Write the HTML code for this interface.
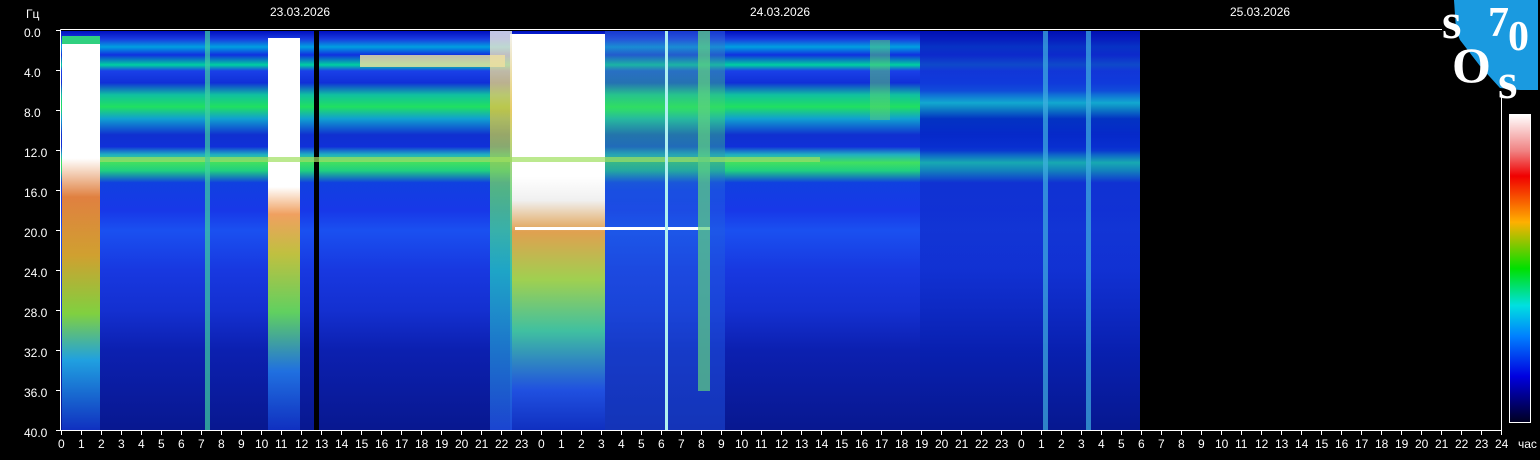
<!DOCTYPE html>
<html><head><meta charset="utf-8"><style>
body{margin:0;width:1540px;height:460px;background:#000;overflow:hidden;position:relative;font-family:"Liberation Sans",sans-serif;color:#fff}
.a{position:absolute}
.lbl{position:absolute;font-size:12px;color:#fff}
</style></head><body>
<div class="a" style="left:61px;top:31px;width:1079px;height:399px;background:linear-gradient(180deg,#0010c0 0%,#1a3ae0 2%,#00a0e0 4%,#1030e0 6%,#00d0a0 8.5%,#1a40e8 10%,#1030d8 13%,#10c0a0 16%,#20e060 19%,#10a0d0 22%,#1030d0 26%,#1030d8 29%,#20b0c0 31%,#40e060 33%,#20d080 35%,#1040e0 38%,#1838e8 45%,#1a50f0 50%,#1838e0 60%,#1430d0 70%,#0c20b0 80%,#081890 100%)"></div>
<div class="a" style="left:920px;top:31px;width:220px;height:399px;background:linear-gradient(180deg,#0010b0 0%,#1030d0 8%,#1040e0 15%,#10a0e0 18%,#0020c0 22%,#0830d0 30%,#10a0c0 33%,#1030d0 38%,#1030d0 60%,#0820b0 80%,#061890 100%);opacity:.85"></div>
<div class="a" style="left:62px;top:42px;width:38px;height:388px;background:linear-gradient(180deg,#fff 0%,#fff 30%,#e08040 40%,#d0a030 55%,#80d040 70%,#20a0e0 82%,#1030c0 100%)"></div>
<div class="a" style="left:62px;top:36px;width:38px;height:8px;background:#30d080"></div>
<div class="a" style="left:268px;top:38px;width:32px;height:392px;background:linear-gradient(180deg,#fff 0%,#fff 38%,#f0a060 45%,#c0c040 55%,#60d060 70%,#2070e0 85%,#1030c0 100%)"></div>
<div class="a" style="left:314px;top:31px;width:5px;height:399px;background:#000"></div>
<div class="a" style="left:510px;top:34px;width:95px;height:396px;background:linear-gradient(180deg,#fff 0%,#fff 36%,#f0f0f0 42%,#e0a050 50%,#a0d050 62%,#40c0a0 75%,#2050e0 90%,#1030c0 100%)"></div>
<div class="a" style="left:490px;top:31px;width:22px;height:399px;background:linear-gradient(180deg,#f0f0f0 0%,#e0c040 20%,#60d070 40%,#20c0c0 60%,#2050e0 100%);opacity:.8"></div>
<div class="a" style="left:605px;top:31px;width:120px;height:399px;background:linear-gradient(180deg,#3060e0 0%,#40e060 20%,#2060e0 40%,#2050e0 100%);opacity:.5"></div>
<div class="a" style="left:360px;top:55px;width:145px;height:12px;background:#f0e0a0;opacity:.8"></div>
<div class="a" style="left:100px;top:157px;width:720px;height:5px;background:#a0e060;opacity:.7"></div>
<div class="a" style="left:515px;top:227px;width:195px;height:3px;background:#fff"></div>
<div class="a" style="left:205px;top:31px;width:5px;height:399px;background:#40d0a0;opacity:.7"></div>
<div class="a" style="left:665px;top:31px;width:3px;height:399px;background:#b0f0f0"></div>
<div class="a" style="left:698px;top:31px;width:12px;height:360px;background:#60d080;opacity:.7"></div>
<div class="a" style="left:1043px;top:31px;width:5px;height:399px;background:#40b0e0;opacity:.7"></div>
<div class="a" style="left:1086px;top:31px;width:5px;height:399px;background:#40b0e0;opacity:.7"></div>
<div class="a" style="left:870px;top:40px;width:20px;height:80px;background:#60d070;opacity:.5"></div>
<svg class="a" style="left:0;top:0" width="1540" height="460">
<g stroke="#fff" stroke-width="1" fill="none">
<path d="M60.5 29.5H1442M60.5 29.5V430.5H1501.5M1501.5 96V430.5"/>
<path d="M56 30.5h4M56 70.5h4M56 110.5h4M56 150.5h4M56 190.5h4M56 230.5h4M56 270.5h4M56 310.5h4M56 350.5h4M56 390.5h4M56 430.5h4"/>
</g>
<g stroke="#fff" id="t"></g>
<rect x="1509.5" y="114.5" width="21" height="308" fill="url(#cb)" stroke="#fff"/>
<defs><linearGradient id="cb" x1="0" y1="0" x2="0" y2="1">
<stop offset="0" stop-color="#fff"/><stop offset=".12" stop-color="#f08080"/><stop offset=".2" stop-color="#f00000"/><stop offset=".35" stop-color="#ffb000"/><stop offset=".5" stop-color="#00e000"/><stop offset=".62" stop-color="#00e0e0"/><stop offset=".72" stop-color="#0080ff"/><stop offset=".85" stop-color="#0000e0"/><stop offset="1" stop-color="#000020"/></linearGradient></defs>
<path d="M1454 0H1538V90H1520L1500 88 1480 66 1460 40 1456 30Z" fill="#1a9ae0"/>
<g fill="#fff" font-family="Liberation Serif,serif" font-weight="bold">
<text x="1442" y="38" font-size="50">s</text>
<text x="1488" y="36" font-size="42">7</text>
<text x="1508" y="50" font-size="42">0</text>
<text x="1452" y="82" font-size="50">O</text>
<text x="1498" y="98" font-size="50">s</text>
</g>
</svg>
<div class="lbl" style="left:26px;top:7px">Гц</div>
<div class="lbl" style="left:270px;top:5px">23.03.2026</div>
<div class="lbl" style="left:750px;top:5px">24.03.2026</div>
<div class="lbl" style="left:1230px;top:5px">25.03.2026</div>
<div id="y"></div><div id="x"></div>
<script>
var y=document.getElementById('y'),h='';
for(var i=0;i<=10;i++){h+='<div class="lbl" style="left:24px;top:'+(26+i*40)+'px">'+(i*4)+'.0</div>';}
y.innerHTML=h;
var x=document.getElementById('x'),s='',t='';
for(var i=0;i<=72;i++){var px=61+i*20,v=i%24;if(i==72)v=24;
s+='<div class="lbl" style="left:'+(px-(v>9?6:3))+'px;top:437px">'+v+'</div>';
t+='<path d="M'+(px+.5)+' 430v5"/>';}
s+='<div class="lbl" style="left:1518px;top:437px">час</div>';
x.innerHTML=s;document.getElementById('t').innerHTML=t;
</script>
</body></html>
